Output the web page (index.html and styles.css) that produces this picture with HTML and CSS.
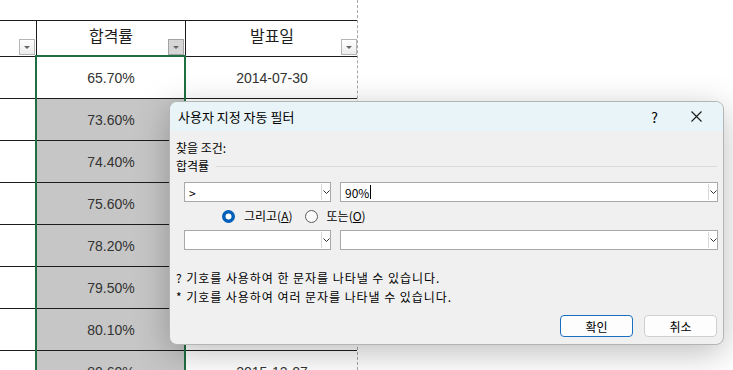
FILE: index.html
```html
<!DOCTYPE html>
<html>
    <head>
        <meta charset="UTF-8">
        <meta name="viewport" content="width=device-width, initial-scale=1.0">
        <title>사용자 지정 자동 필터</title>
        <link rel="stylesheet" href="styles.css">
    </head>
    <body>
        <div id="sheet">
            <div class="row head">
                <div class="cell c1"><span class="filter"></span></div>
                <div class="cell c2">합격률<span class="filter on"></span></div>
                <div class="cell c3">발표일<span class="filter"></span></div>
            </div>
            <div class="row">
                <div class="cell c1"></div>
                <div class="cell c2 active">65.70%</div>
                <div class="cell c3">2014-07-30</div>
            </div>
            <div class="row">
                <div class="cell c1"></div>
                <div class="cell c2 sel">73.60%</div>
                <div class="cell c3"></div>
            </div>
            <div class="row">
                <div class="cell c1"></div>
                <div class="cell c2 sel">74.40%</div>
                <div class="cell c3"></div>
            </div>
            <div class="row">
                <div class="cell c1"></div>
                <div class="cell c2 sel">75.60%</div>
                <div class="cell c3"></div>
            </div>
            <div class="row">
                <div class="cell c1"></div>
                <div class="cell c2 sel">78.20%</div>
                <div class="cell c3"></div>
            </div>
            <div class="row">
                <div class="cell c1"></div>
                <div class="cell c2 sel">79.50%</div>
                <div class="cell c3"></div>
            </div>
            <div class="row">
                <div class="cell c1"></div>
                <div class="cell c2 sel">80.10%</div>
                <div class="cell c3"></div>
            </div>
            <div class="row">
                <div class="cell c1"></div>
                <div class="cell c2 sel">80.60%</div>
                <div class="cell c3">2015-12-07</div>
            </div>
            <div id="selection"></div>
        </div>

        <div id="dialog">
            <div class="titlebar">
                <span class="title">사용자 지정 자동 필터</span>
                <span class="help">?</span>
                <span class="close">
                    <svg width="11" height="11" viewBox="0 0 11 11"><path d="M0.5 0.5L10.5 10.5M10.5 0.5L0.5 10.5" stroke="#1a1a1a" stroke-width="1.1" fill="none"/></svg>
                </span>
            </div>
            <div class="body">
                <div class="label">찾을 조건:</div>
                <div class="group"><span>합격률</span><span class="rule"></span></div>
                <div class="cond">
                    <div class="combo small">
                        <span class="val">&gt;</span>
                        <span class="arrow"><svg width="7" height="4" viewBox="0 0 7 4"><path d="M0.5 0.5L3.5 3.5L6.5 0.5" stroke="#333" fill="none"/></svg></span>
                    </div>
                    <div class="combo wide">
                        <span class="val">90%<i class="caret"></i></span>
                        <span class="arrow"><svg width="7" height="4" viewBox="0 0 7 4"><path d="M0.5 0.5L3.5 3.5L6.5 0.5" stroke="#333" fill="none"/></svg></span>
                    </div>
                </div>
                <div class="logic">
                    <span class="radio checked"><svg width="13" height="13" viewBox="0 0 13 13"><circle cx="6.5" cy="6.5" r="6.5" fill="#005fb8"/><circle cx="6.5" cy="6.5" r="3" fill="#fff"/></svg>그리고(<u>A</u>)</span>
                    <span class="radio"><svg width="13" height="13" viewBox="0 0 13 13"><circle cx="6.5" cy="6.5" r="6" fill="#fafafa" stroke="#5c5c5c"/></svg>또는(<u>O</u>)</span>
                </div>
                <div class="cond">
                    <div class="combo small">
                        <span class="val"></span>
                        <span class="arrow"><svg width="7" height="4" viewBox="0 0 7 4"><path d="M0.5 0.5L3.5 3.5L6.5 0.5" stroke="#333" fill="none"/></svg></span>
                    </div>
                    <div class="combo wide">
                        <span class="val"></span>
                        <span class="arrow"><svg width="7" height="4" viewBox="0 0 7 4"><path d="M0.5 0.5L3.5 3.5L6.5 0.5" stroke="#333" fill="none"/></svg></span>
                    </div>
                </div>
                <div class="hints">
                    <div>? 기호를 사용하여 한 문자를 나타낼 수 있습니다.</div>
                    <div>* 기호를 사용하여 여러 문자를 나타낼 수 있습니다.</div>
                </div>
                <div class="actions">
                    <button class="btn primary">확인</button>
                    <button class="btn">취소</button>
                </div>
            </div>
        </div>
    </body>
</html>
```

FILE: styles.css
```css
html, body {
    margin:0;
    padding:0;
    background:#fff;
    overflow:hidden;
}
body {
    width:733px;
    height:370px;
    position:relative;
}
#sheet {
    position:relative;
    width:358px;
    height:370px;
    padding-top:20px;
    box-sizing:border-box;
    border-right:1px dashed #a6a6a6;
    font-family:"Liberation Sans", Arial, sans-serif;
    font-size:14px;
    color:#333;
}
.row {
    display:grid;
    grid-template-columns:37px 149px 172px;
    height:42px;
    box-sizing:border-box;
    border-bottom:1px solid #1c1c1c;
}
.row.head {
    height:37px;
    border-top:1px solid #1c1c1c;
    font-family:"Noto Sans CJK KR", sans-serif;
    font-size:16px;
    color:#1e1e1e;
}
.cell {
    position:relative;
    display:flex;
    align-items:center;
    justify-content:center;
}
.head .cell {
    padding-bottom:7px;
}
.c1, .c2 {
    border-right:1px solid #1c1c1c;
}
.sel {
    background:#c6c6c6;
}
.filter {
    position:absolute;
    right:1px;
    bottom:1px;
    width:14px;
    height:14px;
    border:1px solid #b5b5b5;
    background:linear-gradient(#ffffff, #ececec);
}
.filter::after {
    content:"";
    position:absolute;
    left:4px;
    top:6px;
    border-left:3px solid transparent;
    border-right:3px solid transparent;
    border-top:3px solid #666;
}
.filter.on {
    background:#d6d6d6;
    border-color:#a3a3a3;
}
#selection {
    position:absolute;
    left:35px;
    top:55px;
    width:151px;
    height:330px;
    border:2px solid #1f6f43;
    box-sizing:border-box;
}

#dialog {
    position:absolute;
    left:169px;
    top:101px;
    width:555px;
    height:244px;
    box-sizing:border-box;
    border:1px solid #b4b4b4;
    border-radius:8px;
    background:#f0f0f0;
    overflow:hidden;
    box-shadow:0 8px 34px rgba(0,0,0,0.26);
    font-family:"Noto Sans CJK KR", sans-serif;
    font-size:12px;
    color:#000;
}
.titlebar {
    height:29px;
    background:#e8f4f7;
    display:flex;
    align-items:center;
    padding-left:8px;
    padding-right:21px;
}
.title {
    flex:1;
    font-size:13px;
}
.help {
    font-size:14px;
    margin-right:33px;
}
.close {
    display:flex;
}
.body {
    padding:8px 5px 0 6px;
    line-height:18px;
}
.group {
    display:flex;
    align-items:center;
}
.rule {
    flex:1;
    height:1px;
    background:#d9d9d9;
    margin-left:7px;
    margin-right:1px;
}
.cond {
    display:flex;
    gap:9px;
    margin-left:8px;
    margin-top:7px;
}
.combo {
    display:flex;
    height:20px;
    box-sizing:border-box;
    border:1px solid #a9a9a9;
    background:#fff;
}
.combo.small {
    width:147px;
}
.combo.wide {
    width:378px;
}
.val {
    flex:1;
    padding-left:4px;
    line-height:17px;
    display:flex;
    align-items:center;
}
.caret {
    display:inline-block;
    width:1px;
    height:14px;
    background:#000;
    margin-left:1px;
}
.arrow {
    width:8px;
    border-left:1px solid #d8d8d8;
    display:flex;
    align-items:center;
    justify-content:center;
    margin:1px 0;
}
.logic {
    display:flex;
    align-items:center;
    margin-left:46px;
    margin-top:5px;
    height:18px;
}
.radio {
    display:flex;
    align-items:center;
}
.radio svg {
    margin-right:9px;
}
.radio.checked {
    margin-right:12px;
}
.logic + .cond {
    margin-top:5px;
}
.hints {
    margin-top:18px;
    line-height:19px;
    letter-spacing:0.95px;
}
.actions {
    display:flex;
    justify-content:flex-end;
    gap:11px;
    margin-top:9px;
    margin-right:1px;
}
.btn {
    width:73px;
    height:22px;
    box-sizing:border-box;
    border:1px solid #cfcfcf;
    border-radius:4px;
    background:#fdfdfd;
    font-family:"Noto Sans CJK KR", sans-serif;
    font-size:12px;
    color:#000;
    padding:0;
}
.btn.primary {
    border-color:#1a6fc0;
}
```
